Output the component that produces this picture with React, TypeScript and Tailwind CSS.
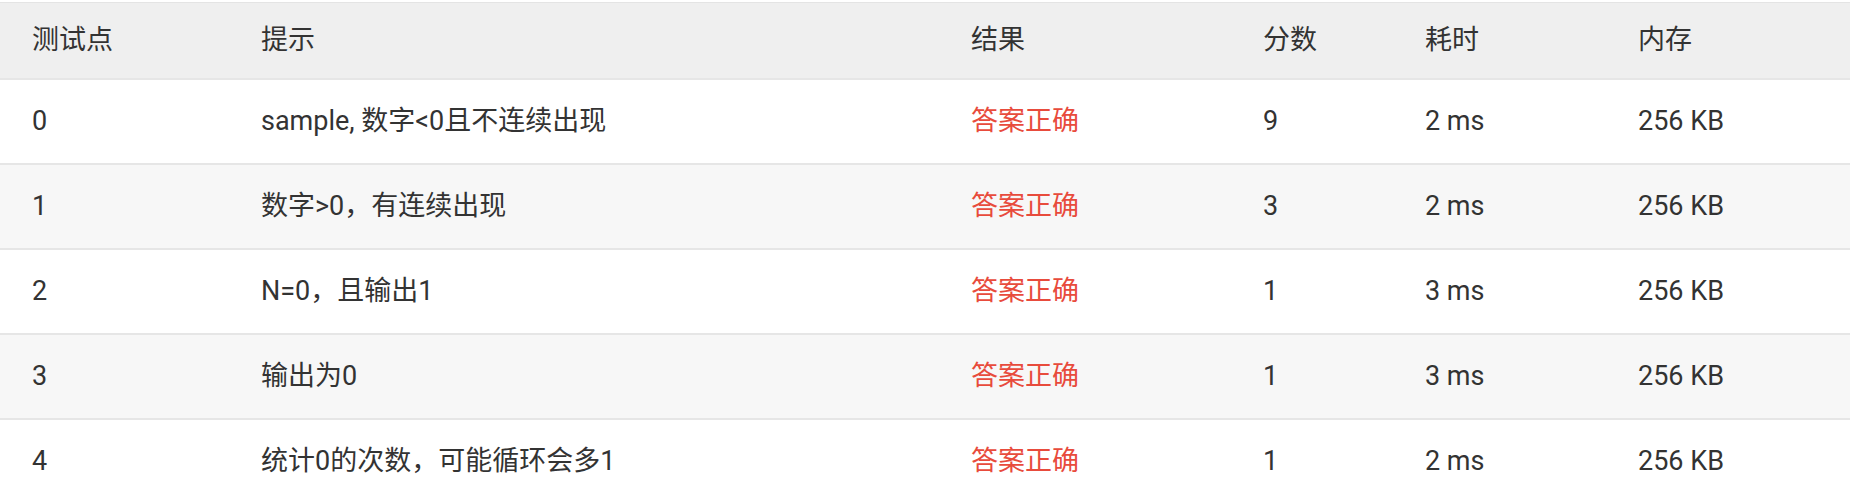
const rows = [
  { id: '0', hint: 'sample, 数字<0且不连续出现', result: '答案正确', score: '9', time: '2 ms', mem: '256 KB' },
  { id: '1', hint: '数字>0，有连续出现', result: '答案正确', score: '3', time: '2 ms', mem: '256 KB' },
  { id: '2', hint: 'N=0，且输出1', result: '答案正确', score: '1', time: '3 ms', mem: '256 KB' },
  { id: '3', hint: '输出为0', result: '答案正确', score: '1', time: '3 ms', mem: '256 KB' },
  { id: '4', hint: '统计0的次数，可能循环会多1', result: '答案正确', score: '1', time: '2 ms', mem: '256 KB' },
];

const cols = 'grid grid-cols-[229px_710px_292px_162px_213px_1fr]';

export default function App() {
  return (
    <div
      className="w-[1850px] h-[493px] overflow-hidden bg-white pt-[2px] text-[27px] text-[#333]"
      style={{ fontFamily: 'Roboto, "Noto Sans CJK SC", sans-serif' }}
    >
      <div className="border-t border-[#e4e4e4]">
        <div className={`${cols} h-[77px] items-center bg-[#efefef] border-b-2 border-[#e6e6e6]`}>
          {['测试点', '提示', '结果', '分数', '耗时', '内存'].map((h) => (
            <div key={h} className="pl-[32px]">{h}</div>
          ))}
        </div>
        {rows.map((r, i) => (
          <div
            key={r.id}
            className={`${cols} h-[85px] items-center border-b-2 border-[#e6e6e6] ${i % 2 === 1 ? 'bg-[#f7f7f7]' : 'bg-white'}`}
          >
            <div className="pl-[32px]">{r.id}</div>
            <div className="pl-[32px]">{r.hint}</div>
            <div className="pl-[32px] text-[#e84b3c]">{r.result}</div>
            <div className="pl-[32px]">{r.score}</div>
            <div className="pl-[32px]">{r.time}</div>
            <div className="pl-[32px]">{r.mem}</div>
          </div>
        ))}
      </div>
    </div>
  );
}
